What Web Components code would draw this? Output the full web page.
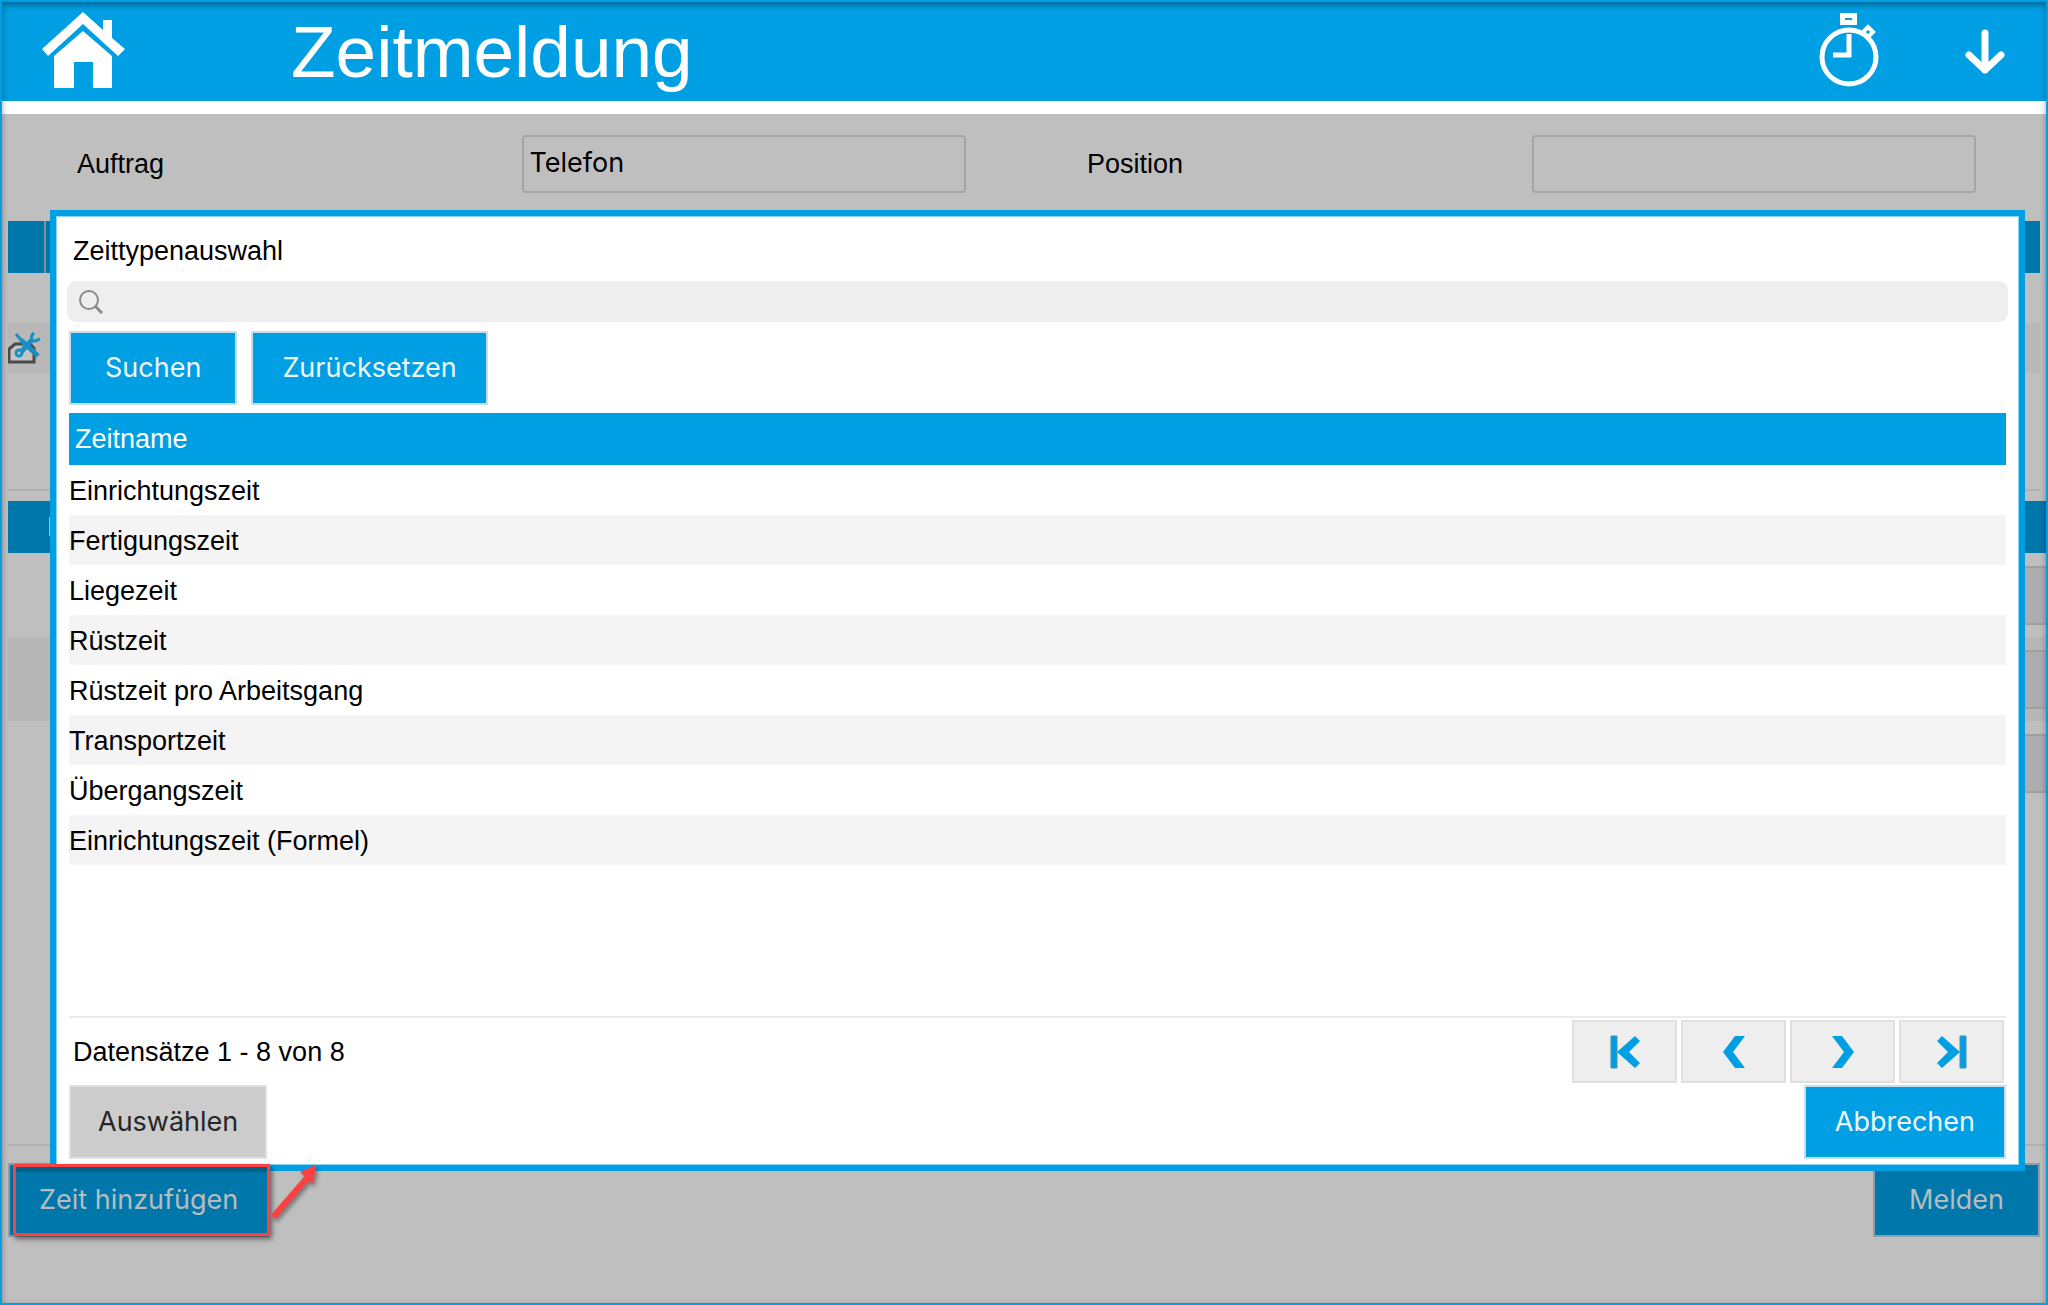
<!DOCTYPE html>
<html lang="de">
<head>
<meta charset="utf-8">
<meta name="viewport" content="width=device-width, initial-scale=1">
<title>Zeitmeldung</title>
<style>
  body {
    margin: 0;
    font: 27px/32px "Liberation Sans", Arial, sans-serif;
    color: #000;
    --blue: #009fe3;
    --dim-blue: #0077aa;
    --ui: Inter, "Noto Sans", sans-serif;
  }
</style>
</head>
<body>
<zeit-app></zeit-app>

<script>
// Schaltfläche: variant = plain | dim | pager, size = wide
class ZeitButton extends HTMLElement {
    constructor() {
        super()
        this.attachShadow({ mode: 'open' })
    }

    connectedCallback() {
        const label = this.getAttribute('label')
        this.shadowRoot.innerHTML = `
        <style>
        :host { display: block; }
        button {
            display: flex;
            align-items: center;
            justify-content: center;
            box-sizing: border-box;
            height: 74px;
            margin: 0;
            padding: 0 29px;
            border: 2px solid #c6dfeb;
            border-radius: 0;
            background: var(--blue);
            color: #eef6fa;
            font: 27px/32px var(--ui);
            white-space: nowrap;
        }
        :host([size=wide]) button { padding: 0 34px; }
        :host([variant=plain]) button {
            padding: 0 27px;
            border-color: #e0e0e0;
            background: #ccc;
            color: #262626;
        }
        :host([variant=dim]) button {
            border-color: #8c9ea8;
            background: var(--dim-blue);
            color: #b6bcc0;
        }
        :host([variant=pager]) button {
            width: 105px;
            height: 63px;
            padding: 0;
            border-color: #e0e0e0;
            background: #eee;
        }
        </style>
        <button type="button" ${label ? `aria-label="${label}"` : ''}><slot></slot></button>
        `
    }
}
customElements.define('zeit-button', ZeitButton);

// Kopfleiste
class ZeitHeader extends HTMLElement {
    constructor() {
        super()
        this.attachShadow({ mode: 'open' })
    }

    connectedCallback() {
        this.shadowRoot.innerHTML = `
        <style>
        :host {
            display: flex;
            align-items: center;
            height: 99px;
            padding: 0 41px 0 40px;
            border-bottom: 13px solid #fff;
            background: var(--blue);
            color: #fff;
        }
        h1 {
            flex: 1;
            margin: 0 0 0 166px;
            font-size: 73px;
            line-height: 99px;
            font-weight: 400;
        }
        a, .watch { margin-bottom: 4px; }
        a, svg { display: block; }
        button {
            margin: 0 0 0 86px;
            padding: 0;
            border: 0;
            background: none;
        }
        </style>
        <a href="#" aria-label="Startseite">
            <svg width="83" height="76" viewBox="0 0 83 76" fill="#fff">
                <path d="M41 0 61 18V8h9v18l13 11-7 7L41 12 6 44 0 37Z"/>
                <path d="M41 19 70 44v32H51V50H32v26H12V44Z"/>
            </svg>
        </a>
        <h1>Zeitmeldung</h1>
        <button class="watch" type="button" aria-label="Stoppuhr">
            <svg width="60" height="76" viewBox="0 0 60 76" fill="none" stroke="#fff">
                <circle cx="30" cy="45" r="27" stroke-width="5"/>
                <path d="M23.500 3.500h12v7h-12Z" stroke-width="5"/>
                <path d="M30 22v21H14" stroke-width="5"/>
                <path d="m49 15 5 5-5 5-5-5Z" stroke-width="4"/>
            </svg>
        </button>
        <button type="button" aria-label="Nach unten">
            <svg width="40" height="48" viewBox="0 0 40 48" fill="none" stroke="#fff" stroke-width="7" stroke-linecap="round" stroke-linejoin="round">
                <path d="M20 5v37M4 27l16 15 16-15"/>
            </svg>
        </button>
        `
    }
}
customElements.define('zeit-header', ZeitHeader);

// Beschriftetes Eingabefeld
class ZeitField extends HTMLElement {
    constructor() {
        super()
        this.attachShadow({ mode: 'open' })
    }

    connectedCallback() {
        this.shadowRoot.innerHTML = `
        <style>
        :host {
            display: grid;
            grid-template-columns: 1fr 1fr;
            align-items: center;
        }
        input {
            box-sizing: border-box;
            width: 100%;
            height: 58px;
            padding: 0 6px 4px;
            border: 2px solid #a6a6a6;
            border-radius: 4px;
            background: transparent;
            color: #000;
            font: 27px/32px var(--ui);
        }
        </style>
        <label for="field">${this.getAttribute('label')}</label>
        <input id="field" type="text" value="${this.getAttribute('value') || ''}">
        `
    }
}
customElements.define('zeit-field', ZeitField);

// Abgedunkelte Seite hinter dem Dialog
class ZeitBackdrop extends HTMLElement {
    constructor() {
        super()
        this.attachShadow({ mode: 'open' })
    }

    connectedCallback() {
        this.shadowRoot.innerHTML = `
        <style>
        :host {
            flex: 1;
            display: flex;
            flex-direction: column;
            background: #bfbfbf;
        }
        .fields {
            display: grid;
            grid-template-columns: 1fr 1fr;
            gap: 121px;
            padding: 21px 70px 28px 75px;
        }
        .grid {
            height: 268px;
            margin: 0 6px;
            border-bottom: 2px solid #b0b0b0;
        }
        .head {
            display: flex;
            height: 52px;
            background: var(--dim-blue);
        }
        .head i {
            width: 2px;
            margin-left: 36px;
            background: #8a8f92;
        }
        .row {
            height: 50px;
            margin-top: 50px;
            background: #b8b8b8;
        }
        .row svg { display: block; padding-top: 8px; }
        .detail {
            flex: 1;
            margin: 10px 0 0 6px;
            border-bottom: 2px solid #b0b0b0;
        }
        .detail .head i {
            width: 1px;
            height: 19px;
            margin: 16px 0 0 41px;
            background: #b6bcc0;
        }
        .cell {
            display: flex;
            justify-content: flex-end;
            align-items: center;
            height: 84px;
        }
        .cell.alt { background: #b7b7b7; }
        .cell b {
            box-sizing: border-box;
            width: 400px;
            height: 59px;
            border: 2px solid #a0a0a0;
            border-right: 0;
            background: #adadaf;
        }
        footer {
            display: flex;
            justify-content: space-between;
            padding: 17px 6px 66px;
        }
        </style>
        <section class="fields">
            <zeit-field label="Auftrag" value="Telefon"></zeit-field>
            <zeit-field label="Position"></zeit-field>
        </section>
        <section class="grid">
            <div class="head"><i></i></div>
            <div class="row">
                <svg width="34" height="34" viewBox="0 0 34 34" fill="none">
                    <path d="M1 31V18l6-5h15l4 4v14Z" fill="#c4c4c4" stroke="#4a4a4a" stroke-width="3"/>
                    <path d="M8 3l6 7" stroke="#1a8fc4" stroke-width="3"/>
                    <path d="M13 9l17 16" stroke="#1a8fc4" stroke-width="5"/>
                    <path d="M25 8 13 21" stroke="#1a8fc4" stroke-width="5"/>
                    <path d="M26 2c-4 3-3 8 1 8l5-2" stroke="#1a8fc4" stroke-width="3"/>
                    <circle cx="11" cy="22" r="3" stroke="#1a8fc4" stroke-width="3"/>
                </svg>
            </div>
        </section>
        <section class="detail">
            <div class="head"><i></i></div>
            <div class="cell"><b></b></div>
            <div class="cell alt"><b></b></div>
            <div class="cell"><b></b></div>
        </section>
        <footer>
            <zeit-button variant="dim"><slot name="add"></slot></zeit-button>
            <zeit-button variant="dim" size="wide">Melden</zeit-button>
        </footer>
        `
    }
}
customElements.define('zeit-backdrop', ZeitBackdrop);

// Dialog mit der Liste der Zeittypen
class ZeitDialog extends HTMLElement {
    constructor() {
        super()
        this.attachShadow({ mode: 'open' })
    }

    connectedCallback() {
        const names = [
            'Einrichtungszeit', 'Fertigungszeit', 'Liegezeit', 'Rüstzeit',
            'Rüstzeit pro Arbeitsgang', 'Transportzeit', 'Übergangszeit',
            'Einrichtungszeit (Formel)'
        ]
        this.shadowRoot.innerHTML = `
        <style>
        :host {
            display: flex;
            flex-direction: column;
            box-sizing: border-box;
            padding: 19px 13px 6px;
            border: 6px solid var(--blue);
            background: #fff;
            box-shadow: inset 0 0 0 1px #8cd4f3;
        }
        h2 {
            margin: 0 4px 14px;
            font-size: 27px;
            line-height: 32px;
            font-weight: 400;
        }
        .search {
            display: flex;
            align-items: center;
            height: 41px;
            margin: 0 -2px 9px;
            padding: 0 12px;
            border-radius: 9px;
            background: #eeeeef;
        }
        .search input {
            flex: 1;
            min-width: 0;
            height: 32px;
            margin-left: 8px;
            padding: 0;
            border: 0;
            outline: 0;
            background: none;
            font: 27px/32px var(--ui);
        }
        .actions { display: flex; gap: 14px; margin-bottom: 8px; }
        .list { flex: 1; border-bottom: 2px solid #ebebeb; }
        table { width: 100%; border-collapse: collapse; }
        th {
            height: 52px;
            padding: 0 6px;
            background: var(--blue);
            color: #fff;
            font-weight: 400;
            text-align: left;
        }
        td { height: 48px; padding: 2px 0 0; }
        tr:nth-child(even) td { background: #f4f4f4; }
        .pager {
            display: flex;
            align-items: center;
            gap: 4px;
            padding: 2px 2px 2px 4px;
        }
        .pager p { flex: 1; margin: 0; }
        .pager svg { display: block; }
        .foot { display: flex; justify-content: space-between; }
        </style>
        <h2 id="title">Zeittypenauswahl</h2>
        <div class="search">
            <svg width="24" height="24" viewBox="0 0 24 24" fill="none" stroke="#8a8a8d" stroke-width="2">
                <circle cx="10" cy="10" r="9"/>
                <path d="m16 16 7 7" stroke-width="3"/>
            </svg>
            <input type="text" aria-label="Suche">
        </div>
        <div class="actions">
            <zeit-button size="wide">Suchen</zeit-button>
            <zeit-button>Zurücksetzen</zeit-button>
        </div>
        <div class="list">
            <table aria-labelledby="title">
                <thead><tr><th>Zeitname</th></tr></thead>
                <tbody>${names.map(n => `<tr><td>${n}</td></tr>`).join('')}</tbody>
            </table>
        </div>
        <div class="pager">
            <p>Datensätze 1 - 8 von 8</p>
            <zeit-button variant="pager" label="Erste Seite">
                <svg width="30" height="34" viewBox="0 0 30 34" fill="#009fe3" stroke="#4a8fae" stroke-width="1">
                    <path d="M25 1l5 5-11 11 11 11-5 5L7 17Z" stroke="none"/><path d="M1 1h6v32H1Z"/>
                </svg>
            </zeit-button>
            <zeit-button variant="pager" label="Vorherige Seite">
                <svg width="22" height="34" viewBox="0 0 22 34" fill="#009fe3">
                    <path d="M12 1h10L10 17l12 16H12L0 17Z"/>
                </svg>
            </zeit-button>
            <zeit-button variant="pager" label="Nächste Seite">
                <svg width="22" height="34" viewBox="0 0 22 34" fill="#009fe3">
                    <path d="M10 1H0l12 16L0 33h10l12-16Z"/>
                </svg>
            </zeit-button>
            <zeit-button variant="pager" label="Letzte Seite">
                <svg width="30" height="34" viewBox="0 0 30 34" fill="#009fe3" stroke="#4a8fae" stroke-width="1">
                    <path d="M5 1 0 6l11 11L0 28l5 5 18-16Z" stroke="none"/><path d="M23 1h6v32h-6Z"/>
                </svg>
            </zeit-button>
        </div>
        <div class="foot">
            <zeit-button variant="plain">Auswählen</zeit-button>
            <zeit-button>Abbrechen</zeit-button>
        </div>
        `
    }
}
customElements.define('zeit-dialog', ZeitDialog);

// Rahmen der Anwendung, Dialog und rote Markierung liegen darüber
class ZeitApp extends HTMLElement {
    constructor() {
        super()
        this.attachShadow({ mode: 'open' })
    }

    connectedCallback() {
        this.shadowRoot.innerHTML = `
        <style>
        :host {
            position: relative;
            display: flex;
            flex-direction: column;
            box-sizing: border-box;
            min-height: 100vh;
            border: 2px solid var(--blue);
        }
        .shade {
            position: absolute;
            inset: 0;
            box-shadow: inset 0 3px 6px rgba(0, 0, 0, .35);
            pointer-events: none;
        }
        zeit-dialog {
            position: absolute;
            inset: 208px 21px 132px 48px;
        }
        .mark {
            position: absolute;
            left: 11px;
            bottom: 67px;
            box-sizing: border-box;
            width: 257px;
            height: 72px;
            border: 3px solid #ff4040;
            box-shadow: 2px 3px 5px rgba(0, 0, 0, .5);
            pointer-events: none;
        }
        .mark::before {
            content: "";
            display: block;
            height: 5px;
            background: #005f88;
        }
        .arrow {
            position: absolute;
            left: 266px;
            bottom: 80px;
            filter: drop-shadow(2px 3px 2px rgba(0, 0, 0, .4));
        }
        </style>
        <zeit-header></zeit-header>
        <zeit-backdrop><span slot="add">Zeit hinzufügen</span></zeit-backdrop>
        <div class="shade"></div>
        <zeit-dialog role="dialog" aria-label="Zeittypenauswahl"></zeit-dialog>
        <div class="mark"></div>
        <svg class="arrow" width="52" height="60" viewBox="0 0 52 60">
            <path d="M5 54 39 15" stroke="#ff4040" stroke-width="6"/>
            <path d="M48 2 32 9l13 12Z" fill="#ff4040"/>
        </svg>
        `
    }
}
customElements.define('zeit-app', ZeitApp);
</script>
</body>
</html>
